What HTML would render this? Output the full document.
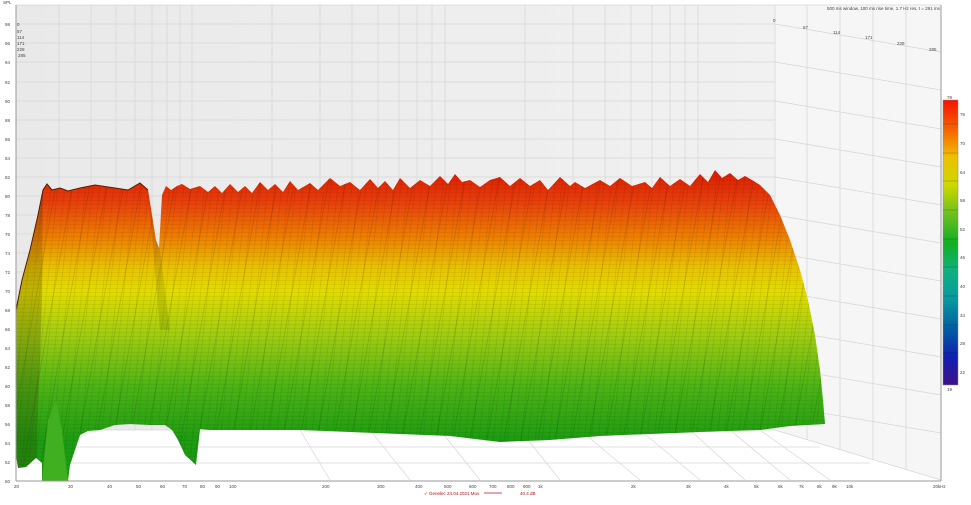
<!DOCTYPE html>
<html><head><meta charset="utf-8"><style>
html,body{margin:0;padding:0;background:#fff;}
body{width:971px;height:500px;overflow:hidden;font-family:"Liberation Sans",sans-serif;}
svg text{font-family:"Liberation Sans",sans-serif;}
</style></head><body>
<svg width="971" height="500" viewBox="0 0 971 500" xmlns="http://www.w3.org/2000/svg">
<defs>
<linearGradient id="wall" x1="0" y1="0" x2="1" y2="0">
<stop offset="0" stop-color="#e9e9e9"/><stop offset="1" stop-color="#f1f1f1"/></linearGradient>
<linearGradient id="wf" x1="0" y1="170" x2="0" y2="440" gradientUnits="userSpaceOnUse">
<stop offset="0" stop-color="#dc1a00"/>
<stop offset="0.12" stop-color="#e8400a"/>
<stop offset="0.25" stop-color="#ee8000"/>
<stop offset="0.36" stop-color="#e8c200"/>
<stop offset="0.45" stop-color="#e2dc00"/>
<stop offset="0.62" stop-color="#9ccc10"/>
<stop offset="0.8" stop-color="#4cb414"/>
<stop offset="1" stop-color="#1c9c10"/>
</linearGradient>
<linearGradient id="cb" x1="0" y1="0" x2="0" y2="1">
<stop offset="0" stop-color="#f41400"/><stop offset="0.1" stop-color="#f56000"/>
<stop offset="0.2" stop-color="#eec000"/><stop offset="0.3" stop-color="#cbd800"/>
<stop offset="0.4" stop-color="#6cc020"/><stop offset="0.5" stop-color="#10b020"/>
<stop offset="0.6" stop-color="#10b080"/><stop offset="0.7" stop-color="#0898a0"/>
<stop offset="0.8" stop-color="#0060a0"/><stop offset="0.9" stop-color="#1020b0"/>
<stop offset="1" stop-color="#40108a"/></linearGradient>
<pattern id="stripes" width="7" height="500" patternUnits="userSpaceOnUse" patternTransform="skewX(-6)">
<rect x="0" y="0" width="0.7" height="500" fill="#000" opacity="0.1"/></pattern>
<pattern id="stripes2" width="17" height="500" patternUnits="userSpaceOnUse" patternTransform="skewX(-10)">
<rect x="3" y="0" width="0.8" height="500" fill="#000" opacity="0.14"/></pattern>
<pattern id="hl" width="20" height="4" patternUnits="userSpaceOnUse">
<rect x="0" y="0" width="20" height="0.5" fill="#000" opacity="0.1"/></pattern>
<clipPath id="wclip"><path id="wfp" d="M16,310 L22,280 L30,250 L38,215 L43,190 L47,184 L52,190 L60,188 L68,191 L80,188 L95,185 L115,188 L128,190 L140,183 L148,190 L152,215 L156,240 L159,248 L162,195 L166,186 L171,190 L177,186 L182,184 L190,189 L200,186 L208,192 L215,186 L222,193 L230,184 L238,192 L245,186 L252,193 L260,182 L268,190 L275,184 L283,192 L290,181 L298,190 L310,183 L318,190 L330,178 L340,186 L350,182 L360,190 L370,179 L378,188 L385,181 L393,190 L400,178 L410,188 L420,180 L430,186 L440,176 L448,184 L455,174 L462,182 L470,180 L480,187 L490,180 L500,177 L510,186 L520,178 L530,186 L540,180 L548,190 L560,177 L570,186 L575,182 L585,188 L600,180 L610,186 L620,178 L632,186 L645,182 L652,188 L660,177 L670,186 L680,179 L690,186 L700,174 L708,182 L715,170 L722,178 L730,173 L738,180 L745,176 L752,180 L760,185 L770,195 L780,215 L790,240 L800,270 L808,300 L815,335 L820,370 L823,400 L825,424 L790,426 L760,430 L700,432 L650,434 L600,436 L550,440 L500,442 L450,436 L400,434 L350,432 L300,430 L250,430 L210,430 L200,429 L196,465 L185,455 L178,440 L172,430 L165,425 L150,425 L130,424 L115,425 L100,430 L88,431 L80,435 L70,465 L68,481 L42,481 L42,463 L36,458 L26,467 L18,468 L16,455 Z"/></clipPath>
</defs>
<rect x="16" y="5" width="759" height="425" fill="url(#wall)"/>
<polygon points="775,5 941,5 941,480 775,430" fill="#f6f6f6"/>
<g stroke="#d6d6d6" stroke-width="0.7">
<line x1="16" y1="5" x2="941" y2="5"/>
<line x1="16" y1="24" x2="775" y2="24"/><line x1="16" y1="43" x2="775" y2="43"/>
<line x1="16" y1="62" x2="775" y2="62"/><line x1="16" y1="82" x2="775" y2="82"/>
<line x1="16" y1="101" x2="775" y2="101"/><line x1="16" y1="120" x2="775" y2="120"/>
<line x1="16" y1="139" x2="775" y2="139"/><line x1="16" y1="158" x2="775" y2="158"/>
<line x1="16" y1="177" x2="775" y2="177"/><line x1="16" y1="196" x2="775" y2="196"/>
<line x1="16" y1="215" x2="775" y2="215"/><line x1="16" y1="234" x2="775" y2="234"/>
<line x1="16" y1="253" x2="775" y2="253"/><line x1="16" y1="272" x2="775" y2="272"/>
<line x1="16" y1="291" x2="775" y2="291"/><line x1="16" y1="310" x2="775" y2="310"/>
<line x1="16" y1="329" x2="775" y2="329"/><line x1="16" y1="348" x2="775" y2="348"/>
<line x1="16" y1="367" x2="775" y2="367"/><line x1="16" y1="386" x2="775" y2="386"/>
<line x1="16" y1="405" x2="775" y2="405"/><line x1="16" y1="424" x2="775" y2="424"/>
<line x1="59" y1="5" x2="59" y2="430"/><line x1="91" y1="5" x2="91" y2="430"/>
<line x1="116" y1="5" x2="116" y2="430"/><line x1="135" y1="5" x2="135" y2="430"/>
<line x1="152" y1="5" x2="152" y2="430"/><line x1="167" y1="5" x2="167" y2="430"/>
<line x1="180" y1="5" x2="180" y2="430"/><line x1="192" y1="5" x2="192" y2="430"/>
<line x1="272" y1="5" x2="272" y2="430"/><line x1="320" y1="5" x2="320" y2="430"/>
<line x1="352" y1="5" x2="352" y2="430"/><line x1="378" y1="5" x2="378" y2="430"/>
<line x1="399" y1="5" x2="399" y2="430"/><line x1="417" y1="5" x2="417" y2="430"/>
<line x1="432" y1="5" x2="432" y2="430"/><line x1="445" y1="5" x2="445" y2="430"/>
<line x1="525" y1="5" x2="525" y2="430"/><line x1="573" y1="5" x2="573" y2="430"/>
<line x1="605" y1="5" x2="605" y2="430"/><line x1="631" y1="5" x2="631" y2="430"/>
<line x1="652" y1="5" x2="652" y2="430"/><line x1="670" y1="5" x2="670" y2="430"/>
<line x1="685" y1="5" x2="685" y2="430"/><line x1="698" y1="5" x2="698" y2="430"/>
<line x1="775" y1="5" x2="775" y2="430"/>
<line x1="807" y1="5" x2="807" y2="440"/><line x1="840" y1="5" x2="840" y2="450"/>
<line x1="873" y1="5" x2="873" y2="460"/><line x1="906" y1="5" x2="906" y2="470"/>
<line x1="775" y1="24" x2="941" y2="52"/><line x1="775" y1="62" x2="941" y2="90"/>
<line x1="775" y1="101" x2="941" y2="129"/><line x1="775" y1="139" x2="941" y2="167"/>
<line x1="775" y1="177" x2="941" y2="205"/><line x1="775" y1="215" x2="941" y2="243"/>
<line x1="775" y1="253" x2="941" y2="281"/><line x1="775" y1="291" x2="941" y2="319"/>
<line x1="775" y1="329" x2="941" y2="357"/><line x1="775" y1="367" x2="941" y2="395"/>
<line x1="775" y1="405" x2="941" y2="433"/><line x1="775" y1="430" x2="941" y2="480"/>
<line x1="300" y1="430" x2="330" y2="480"/><line x1="370" y1="430" x2="410" y2="480"/>
<line x1="440" y1="430" x2="480" y2="480"/><line x1="520" y1="430" x2="560" y2="480"/>
<line x1="580" y1="430" x2="640" y2="480"/><line x1="640" y1="430" x2="700" y2="480"/>
<line x1="690" y1="430" x2="745" y2="480"/><line x1="730" y1="430" x2="790" y2="480"/>
<line x1="760" y1="430" x2="830" y2="480"/><line x1="16" y1="430" x2="775" y2="430"/>
<line x1="16" y1="447" x2="820" y2="447"/><line x1="16" y1="463" x2="870" y2="463"/>
</g>
<g clip-path="url(#wclip)">
<rect x="0" y="160" width="840" height="330" fill="url(#wf)"/>
<rect x="0" y="160" width="840" height="330" fill="url(#stripes)"/>
<rect x="0" y="160" width="840" height="330" fill="url(#stripes2)"/>
<rect x="0" y="160" width="840" height="330" fill="url(#hl)"/>
<polygon points="16,300 30,250 38,215 43,190 42,300 36,470 16,470" fill="#3a2a00" opacity="0.22"/>
<polygon points="42,481 48,420 56,400 62,430 68,481" fill="#40b020"/>
<polygon points="148,190 160,250 170,330 160,330" fill="#000" opacity="0.1"/>
</g>
<path d="M16,310 L22,280 L30,250 L38,215 L43,190 L47,184 L52,190 L60,188 L68,191 L80,188 L95,185 L115,188 L128,190 L140,183 L148,190" fill="none" stroke="#5a1a00" stroke-width="1"/>
<line x1="16" y1="5" x2="16" y2="481" stroke="#9a9a9a" stroke-width="1"/>
<line x1="16" y1="481" x2="941" y2="481" stroke="#9a9a9a" stroke-width="1"/>
<line x1="941" y1="5" x2="941" y2="481" stroke="#9a9a9a" stroke-width="1"/>
<g font-size="4.5" fill="#444">
<text x="3" y="4">SPL</text>
<text x="5" y="26">98</text><text x="5" y="45">96</text><text x="5" y="64">94</text><text x="5" y="84">92</text>
<text x="5" y="103">90</text><text x="5" y="122">88</text><text x="5" y="141">86</text><text x="5" y="160">84</text>
<text x="5" y="179">82</text><text x="5" y="198">80</text><text x="5" y="217">78</text><text x="5" y="236">76</text>
<text x="5" y="255">74</text><text x="5" y="274">72</text><text x="5" y="293">70</text><text x="5" y="312">68</text>
<text x="5" y="331">66</text><text x="5" y="350">64</text><text x="5" y="369">62</text><text x="5" y="388">60</text>
<text x="5" y="407">58</text><text x="5" y="426">56</text><text x="5" y="445">54</text><text x="5" y="464">52</text>
<text x="5" y="483">50</text>
<text x="17" y="26">0</text><text x="17" y="33">57</text><text x="17" y="39">114</text><text x="17" y="45">171</text><text x="17" y="51">228</text><text x="18" y="57">285</text>
<text x="773" y="22">0</text><text x="803" y="29">57</text><text x="833" y="34">114</text><text x="865" y="39">171</text><text x="897" y="45">228</text><text x="929" y="51">285</text>
<text x="827" y="10">500 ms window, 100 ms rise time, 1.7 Hz res, t = 291 ms</text>
<text x="14" y="488">20</text><text x="68" y="488">30</text><text x="107" y="488">40</text><text x="136" y="488">50</text>
<text x="160" y="488">60</text><text x="182" y="488">70</text><text x="200" y="488">80</text><text x="215" y="488">90</text>
<text x="229" y="488">100</text><text x="322" y="488">200</text><text x="377" y="488">300</text><text x="415" y="488">400</text>
<text x="444" y="488">500</text><text x="469" y="488">600</text><text x="489" y="488">700</text><text x="507" y="488">800</text>
<text x="523" y="488">900</text><text x="538" y="488">1k</text><text x="631" y="488">2k</text><text x="686" y="488">3k</text>
<text x="724" y="488">4k</text><text x="754" y="488">5k</text><text x="778" y="488">6k</text><text x="799" y="488">7k</text>
<text x="817" y="488">8k</text><text x="832" y="488">9k</text><text x="846" y="488">10k</text><text x="933" y="488">20kHz</text>
</g>
<rect x="943" y="100" width="15" height="285" fill="url(#cb)" stroke="#888" stroke-width="0.5"/>
<g stroke="#000" stroke-opacity="0.35" stroke-width="0.5">
<line x1="943" y1="124" x2="958" y2="124"/><line x1="943" y1="153" x2="958" y2="153"/><line x1="943" y1="181" x2="958" y2="181"/>
<line x1="943" y1="210" x2="958" y2="210"/><line x1="943" y1="239" x2="958" y2="239"/><line x1="943" y1="267" x2="958" y2="267"/>
<line x1="943" y1="296" x2="958" y2="296"/><line x1="943" y1="325" x2="958" y2="325"/><line x1="943" y1="353" x2="958" y2="353"/>
</g>
<g font-size="4.5" fill="#444">
<text x="947" y="99">79</text><text x="960" y="116">76</text><text x="960" y="145">70</text><text x="960" y="174">64</text>
<text x="960" y="202">58</text><text x="960" y="231">52</text><text x="960" y="259">46</text><text x="960" y="288">40</text>
<text x="960" y="317">34</text><text x="960" y="345">28</text><text x="960" y="374">22</text><text x="947" y="391">19</text>
</g>
<g font-size="4.5" fill="#b01010">
<text x="424" y="495">✓ Genelec 24.04.2021 Mov</text>
<line x1="484" y1="493" x2="502" y2="493" stroke="#c01010" stroke-width="0.8"/>
<text x="520" y="495">40.4 dB</text>
</g>
</svg>
</body></html>
